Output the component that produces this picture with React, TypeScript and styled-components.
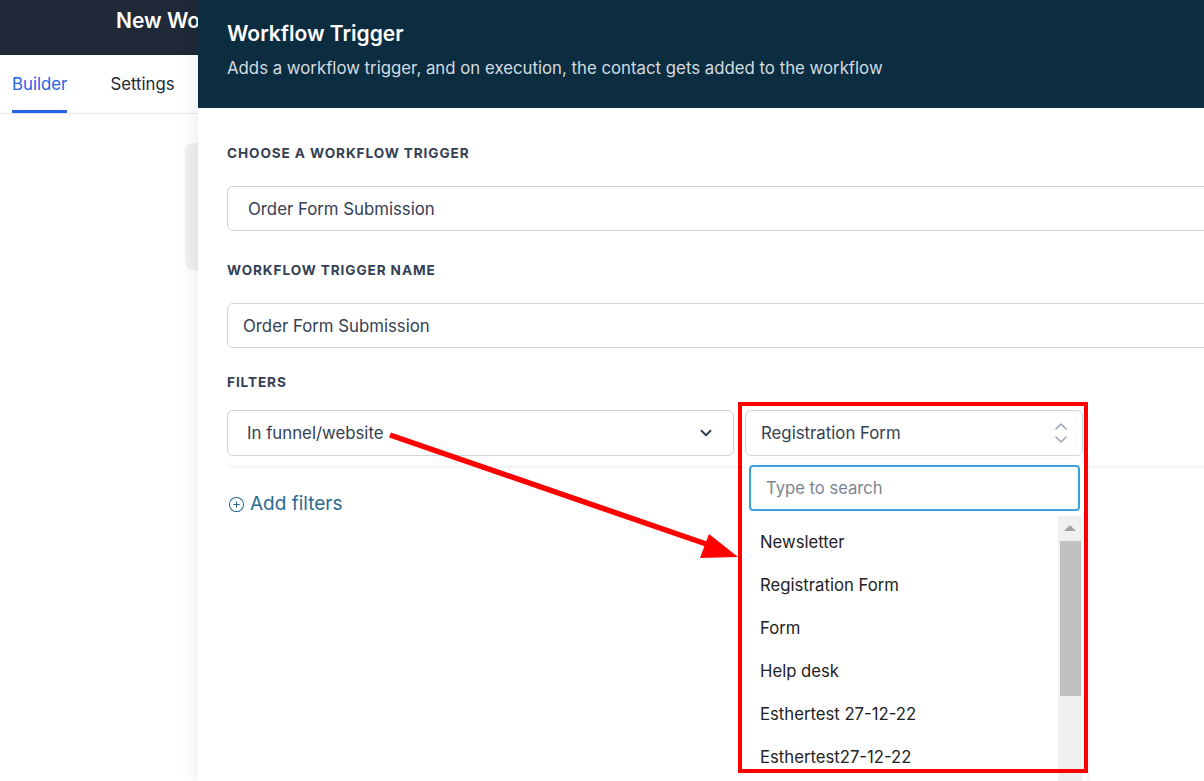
import styled, { createGlobalStyle } from "styled-components";
import { ChevronDown, CirclePlus } from "lucide-react";

const GlobalStyle = createGlobalStyle`
  html, body {
    margin: 0;
    padding: 0;
    height: 100%;
    overflow: hidden;
    background: #ffffff;
    font-family: Inter, "Noto Sans", sans-serif;
  }
  #root {
    height: 100%;
  }
  * {
    box-sizing: border-box;
  }
`;

const forms = [
  "Newsletter",
  "Registration Form",
  "Form",
  "Help desk",
  "Esthertest 27-12-22",
  "Esthertest27-12-22",
  "Contact Us",
];

// up / down chevrons of the searchable select
const UpDown = () => (
  <svg width="14" height="22" viewBox="0 0 14 22" fill="none" stroke="#98a2b3" strokeWidth="1.5" strokeLinecap="round" strokeLinejoin="round">
    <path d="M2 7 L7 2 L12 7" />
    <path d="M2 15 L7 20 L12 15" />
  </svg>
);

const App = () => {
  return (
    <Page>
      <GlobalStyle />
      <Backdrop>
        <TopBar>
          <PageTitle>New Workflow</PageTitle>
        </TopBar>
        <Tabs>
          <Tab active>Builder</Tab>
          <Tab>Settings</Tab>
        </Tabs>
        <Canvas>
          <CanvasCard />
        </Canvas>
      </Backdrop>

      <Drawer>
        <DrawerHeader>
          <DrawerTitle>Workflow Trigger</DrawerTitle>
          <DrawerSub>
            Adds a workflow trigger, and on execution, the contact gets added to the workflow
          </DrawerSub>
        </DrawerHeader>
        <DrawerBody>
          <Label>Choose a workflow trigger</Label>
          <Field indent={20} gapAfter={29}>Order Form Submission</Field>

          <Label>Workflow trigger name</Label>
          <Field indent={15} gapAfter={24}>Order Form Submission</Field>

          <Label tight>Filters</Label>
          <FilterRow>
            <Select width={507}>
              <span>In funnel/website</span>
              <ChevronDown size={18} strokeWidth={2.6} color="#344054" />
            </Select>
            <SelectWrap>
              <Select width={338} compact>
                <span>Registration Form</span>
                <UpDown />
              </Select>
              <Menu>
                <SearchBox placeholder="Type to search" readOnly />
                <MenuBody>
                  <Options>
                    {forms.map((f) => (
                      <Option key={f}>{f}</Option>
                    ))}
                  </Options>
                  <ScrollTrack>
                    <ScrollArrow />
                    <ScrollThumb />
                  </ScrollTrack>
                </MenuBody>
              </Menu>
            </SelectWrap>
          </FilterRow>

          <AddFilters>
            <CirclePlus size={17} strokeWidth={1.5} />
            Add filters
          </AddFilters>
        </DrawerBody>
      </Drawer>

      <Highlight />
      <ArrowLayer viewBox="0 0 1204 781" width="1204" height="781">
        <line x1="390" y1="435" x2="712" y2="546" stroke="#ff0000" strokeWidth="5.5" />
        <polygon points="738,557 709,534 700,558" fill="#ff0000" />
      </ArrowLayer>
    </Page>
  );
};

export default App;

const Page = styled.div`
  position: relative;
  width: 100%;
  height: 100%;
  overflow: hidden;
`;

const Backdrop = styled.div`
  width: 100%;
  height: 100%;
`;

const TopBar = styled.div`
  height: 55px;
  background: #1f2937;
  display: flex;
  align-items: flex-start;
  padding: 8px 0 0 116px;
`;

const PageTitle = styled.span`
  color: #ffffff;
  font-size: 21px;
  font-weight: 600;
  line-height: 26px;
  white-space: nowrap;
`;

const Tabs = styled.div`
  display: flex;
  gap: 43px;
  height: 59px;
  padding-left: 12px;
  border-bottom: 1px solid #e5e7eb;
`;

const Tab = styled.div<{ active?: boolean }>`
  display: flex;
  align-items: center;
  font-size: 16.8px;
  color: ${(p) => (p.active ? "#2563eb" : "#1f2937")};
  border-bottom: 3px solid ${(p) => (p.active ? "#2563eb" : "transparent")};
  padding-top: 3px;
  white-space: nowrap;
`;

const Canvas = styled.div`
  padding: 29px 0 0 185px;
`;

const CanvasCard = styled.div`
  width: 320px;
  height: 127px;
  border-radius: 8px;
  background: #f0f1f3;
`;

const Drawer = styled.div`
  position: absolute;
  top: 0;
  left: 198px;
  width: 1130px;
  height: 100%;
  background: #ffffff;
  box-shadow: -6px 0 14px rgba(0, 0, 0, 0.06);
  display: flex;
  flex-direction: column;
`;

const DrawerHeader = styled.div`
  height: 108px;
  background: #0c2d40;
  padding: 20px 29px 0;
`;

const DrawerTitle = styled.div`
  color: #ffffff;
  font-size: 21px;
  font-weight: 600;
  line-height: 28px;
`;

const DrawerSub = styled.div`
  color: #d3dbe0;
  font-size: 16.8px;
  line-height: 22px;
  margin-top: 9px;
  white-space: nowrap;
`;

const DrawerBody = styled.div`
  padding: 35px 29px 0;
  display: flex;
  flex-direction: column;
  align-items: flex-start;
`;

const Label = styled.div<{ tight?: boolean }>`
  font-size: 13.6px;
  font-weight: 700;
  line-height: 20px;
  letter-spacing: 0.9px;
  text-transform: uppercase;
  color: #344054;
  margin-bottom: ${(p) => (p.tight ? 18 : 23)}px;
`;

const Field = styled.div<{ indent: number; gapAfter: number }>`
  align-self: stretch;
  height: 45px;
  display: flex;
  align-items: center;
  padding-left: ${(p) => p.indent}px;
  border: 1px solid #d0d5dd;
  border-radius: 6px;
  font-size: 16.8px;
  color: #344054;
  margin-bottom: ${(p) => p.gapAfter}px;
`;

const FilterRow = styled.div`
  align-self: stretch;
  display: flex;
  gap: 11px;
  padding-bottom: 10px;
  border-radius: 6px;
  box-shadow: 0 1px 1px rgba(16, 24, 40, 0.05);
  border-bottom: 1px solid #f2f4f7;
`;

const Select = styled.div<{ width: number; compact?: boolean }>`
  width: ${(p) => p.width}px;
  height: 46px;
  display: flex;
  align-items: center;
  justify-content: space-between;
  padding: 0 ${(p) => (p.compact ? 14 : 18)}px 0 ${(p) => (p.compact ? 15 : 19)}px;
  border: 1px solid #d0d5dd;
  border-radius: 6px;
  font-size: 16.8px;
  color: #344054;
  background: #ffffff;
`;

const SelectWrap = styled.div`
  position: relative;
`;

const Menu = styled.div`
  position: absolute;
  top: 50px;
  left: 0;
  width: 342px;
  height: 340px;
  background: #ffffff;
  box-shadow: 2px 0 4px rgba(0, 0, 0, 0.06);
  padding: 5px 5px 0 4px;
  display: flex;
  flex-direction: column;
  z-index: 2;
`;

const SearchBox = styled.input`
  height: 46px;
  width: 331px;
  border: 2px solid #3b9fe0;
  border-radius: 4px;
  padding: 0 15px;
  font-family: Inter, "Noto Sans", sans-serif;
  font-size: 16.6px;
  color: #344054;
  outline: none;
  &::placeholder {
    color: #7b8594;
  }
`;

const MenuBody = styled.div`
  flex: 1;
  display: flex;
  margin-top: 5px;
  overflow: hidden;
`;

const Options = styled.div`
  flex: 1;
  padding-top: 4px;
`;

const Option = styled.div`
  height: 43px;
  display: flex;
  align-items: center;
  padding-left: 11px;
  font-size: 16.7px;
  color: #222222;
  white-space: nowrap;
`;

const ScrollTrack = styled.div`
  width: 24px;
  background: #f0f0f0;
  display: flex;
  flex-direction: column;
  align-items: center;
  padding-top: 9px;
`;

const ScrollArrow = styled.div`
  width: 0;
  height: 0;
  border-left: 6px solid transparent;
  border-right: 6px solid transparent;
  border-bottom: 6px solid #a3a3a3;
`;

const ScrollThumb = styled.div`
  width: 21px;
  height: 155px;
  margin-top: 10px;
  background: #c1c1c1;
`;

const AddFilters = styled.div`
  display: flex;
  align-items: center;
  gap: 5px;
  margin-top: 25px;
  padding-left: 1px;
  font-size: 19px;
  line-height: 24px;
  color: #2b6a8e;
`;

const Highlight = styled.div`
  position: absolute;
  left: 738px;
  top: 402px;
  width: 350px;
  height: 371px;
  border: 4px solid #ff0000;
  z-index: 5;
  pointer-events: none;
`;

const ArrowLayer = styled.svg`
  position: absolute;
  left: 0;
  top: 0;
  z-index: 6;
  pointer-events: none;
`;
